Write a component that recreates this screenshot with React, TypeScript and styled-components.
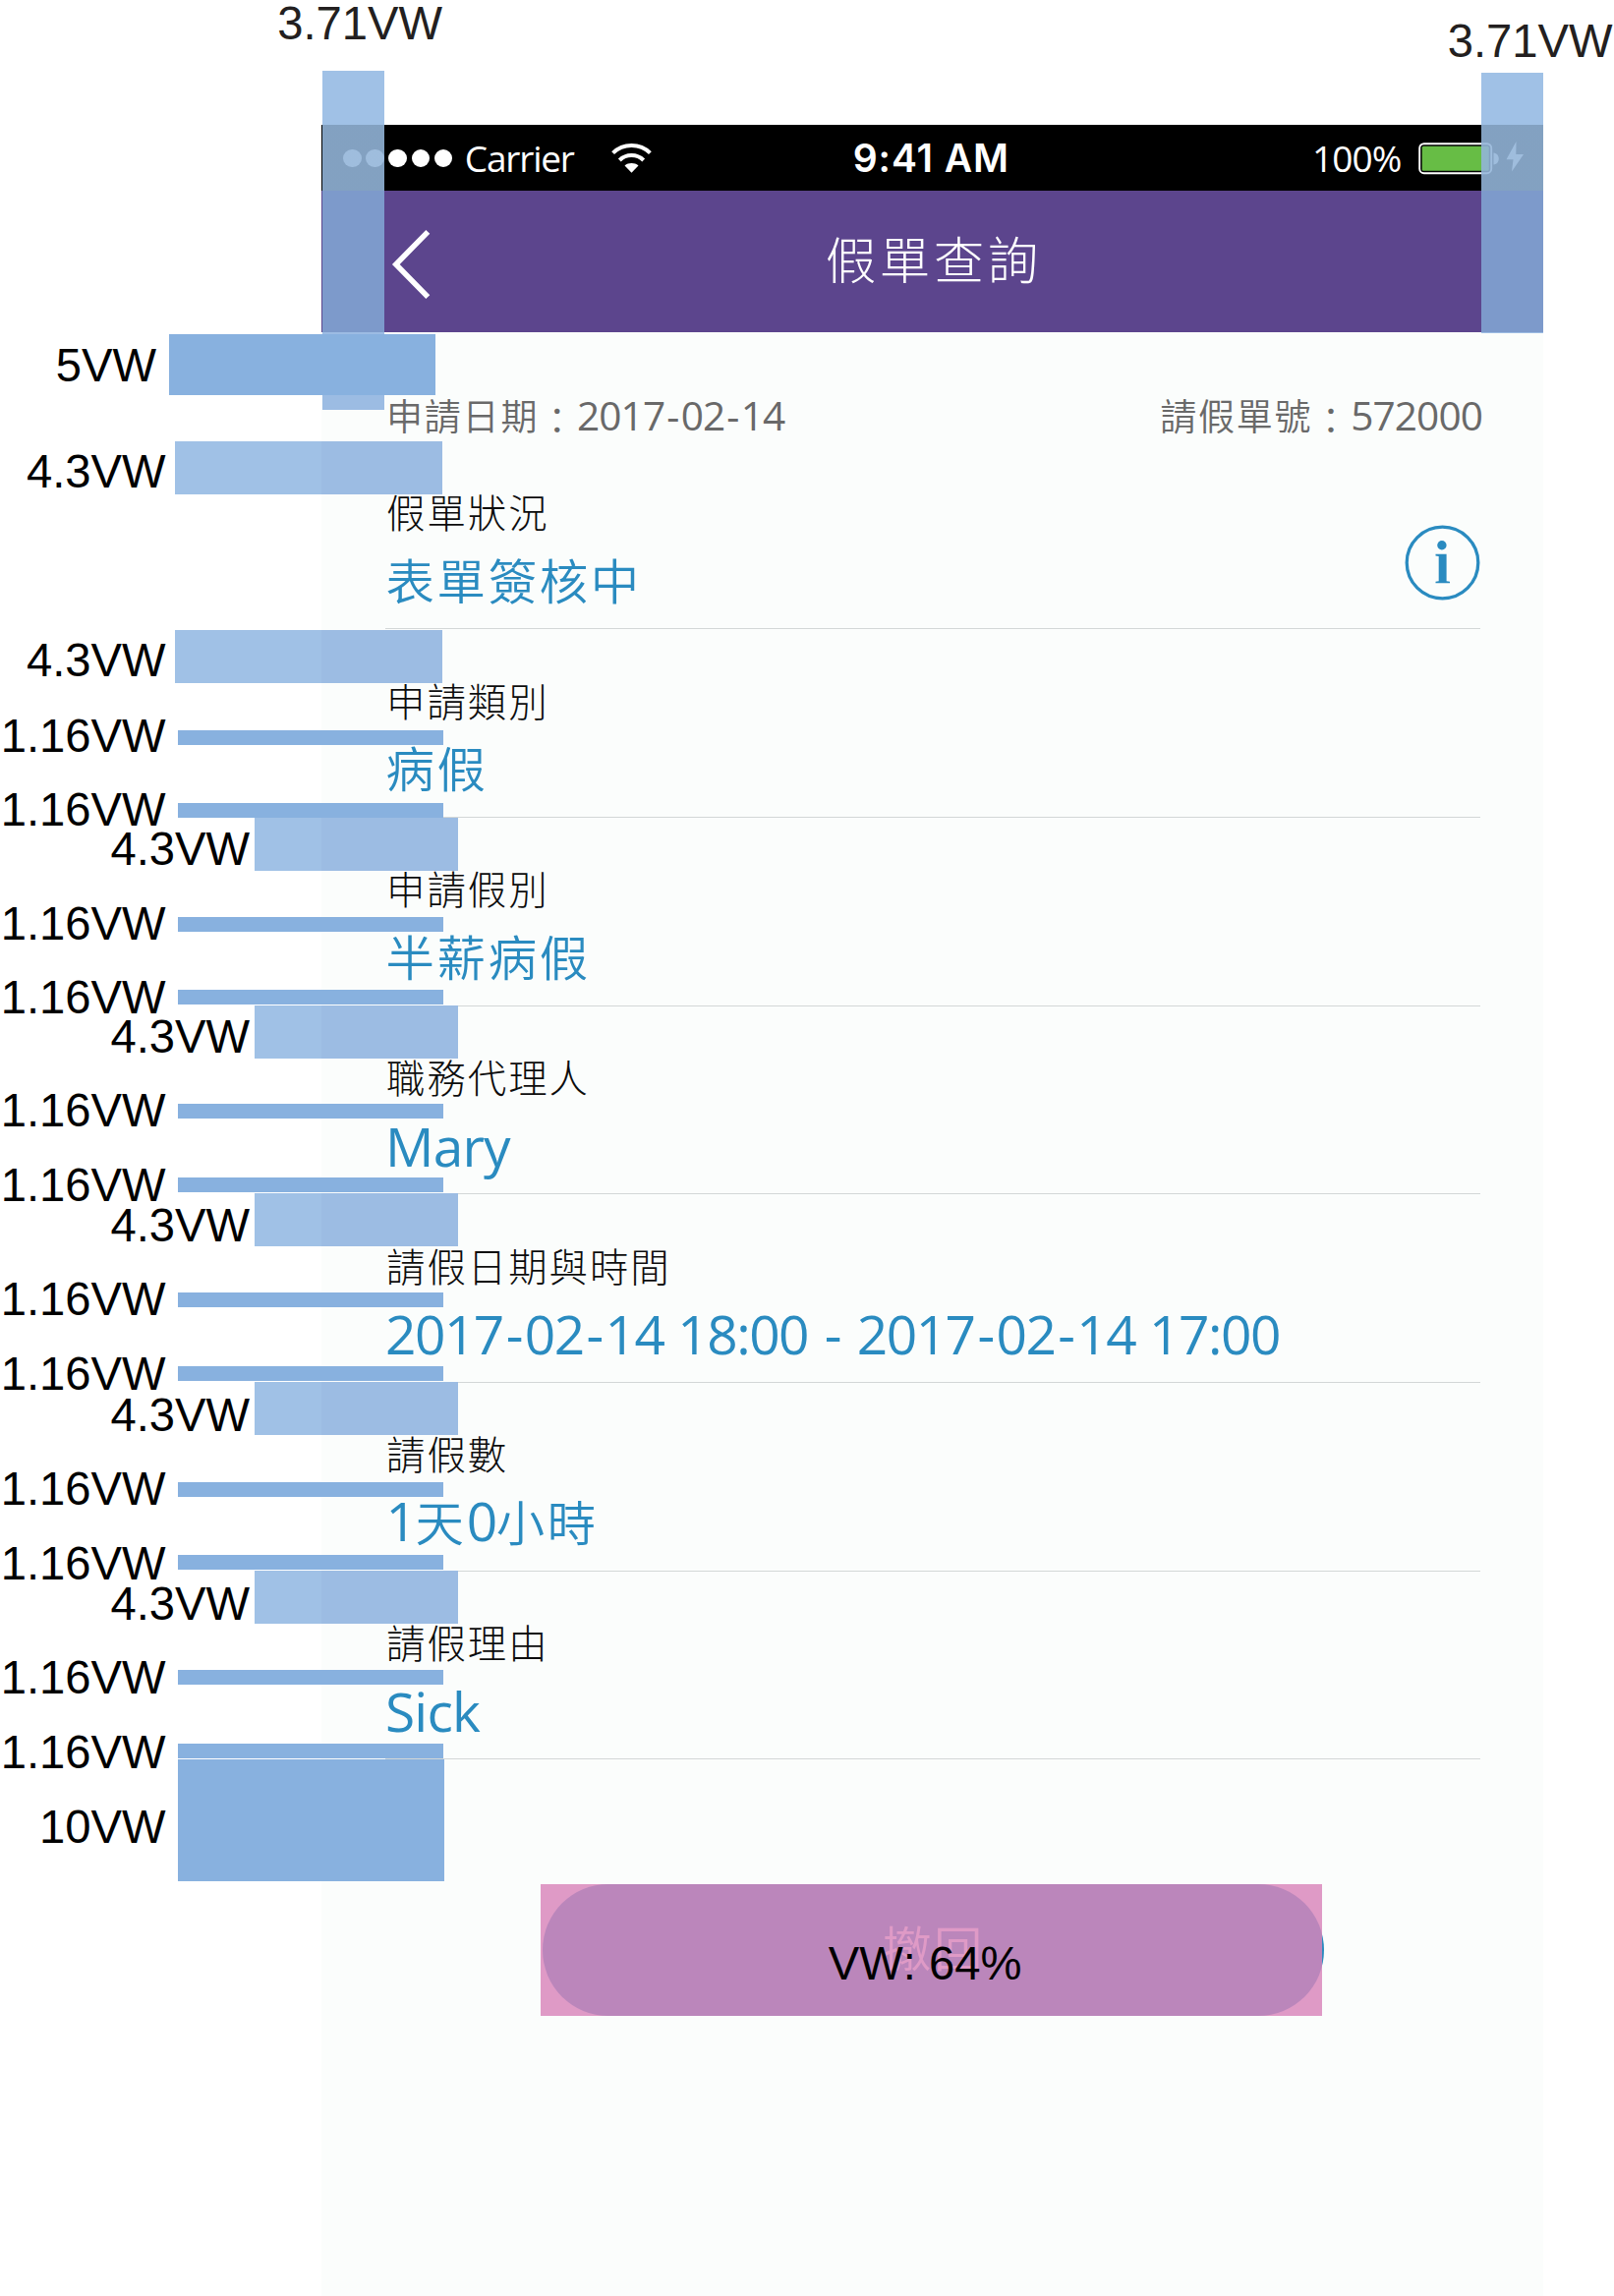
import React from "react";
import styled, { createGlobalStyle } from "styled-components";

const GlobalStyle = createGlobalStyle`
  * { box-sizing: border-box; }
  body { margin: 0; background: #fff; }
`;

const UI_FONT = `"Open Sans", "Noto Sans CJK TC", sans-serif`;
const CJK_FONT = `"Noto Sans CJK TC", sans-serif`;
const BLUE = "#2a8bc0";

const Canvas = styled.div`
  position: relative;
  width: 1642px;
  height: 2336px;
  overflow: hidden;
  padding: 127px 72px 0 327px;
  background: #fff;
`;

const Phone = styled.main`
  display: flex;
  flex-direction: column;
  width: 1242.5px;
  height: 2209px;
  background: #fbfdfc;
`;

const StatusBar = styled.div`
  display: grid;
  grid-template-columns: 1fr auto 1fr;
  align-items: center;
  height: 67px;
  padding: 0 19px 0 22px;
  background: #000;
  color: #fff;
`;

const StatusGroup = styled.div<{ $end?: boolean }>`
  display: flex;
  align-items: center;
  justify-content: ${(p) => (p.$end ? "flex-end" : "flex-start")};
`;

const SignalDots = styled.div`
  display: flex;
  gap: 4.6px;
  margin-right: 12.5px;
  padding-top: 1px;
`;

const Dot = styled.i`
  width: 18.6px;
  height: 18.6px;
  border-radius: 50%;
  background: #fff;
`;

const StatusText = styled.span<{ $spacing: number }>`
  font: 400 37px/65px ${UI_FONT};
  padding-bottom: 1px;
  letter-spacing: ${(p) => p.$spacing}px;
`;

const Clock = styled.span`
  margin-right: 5px;
  font: 600 39px/67px Inter, sans-serif;
  letter-spacing: 0.9px;
`;

const WifiIcon = styled.svg`
  margin-left: 38px;
`;

const BatteryIcon = styled.svg`
  margin-left: 17px;
`;

const NavBar = styled.header`
  display: grid;
  grid-template-columns: 1fr auto 1fr;
  align-items: center;
  height: 144px;
  padding: 0 65px 0 71px;
  background: #5c458d;
  color: #fff;
`;

const NavTitle = styled.h1`
  margin: 0 3px 9px 0;
  font: 320 51.5px/76px ${CJK_FONT};
  letter-spacing: 3.5px;
`;

const BackIcon = styled.svg`
  margin-top: 5px;
`;

const Content = styled.section`
  display: flex;
  flex-direction: column;
  padding: 0 63.5px 0 65px;
`;

const Meta = styled.div`
  display: flex;
  justify-content: space-between;
  height: 110.6px;
  margin-right: -2px;
  padding-top: 56px;
  color: #696969;
`;

const MetaItem = styled.span`
  display: flex;
  align-items: baseline;
  padding-left: 1px;
  line-height: 56px;
`;

const MetaName = styled.span`
  font-family: ${CJK_FONT};
  font-weight: 330;
  font-size: 37px;
  letter-spacing: 1.8px;
`;

const Colon = styled.span`
  display: inline-block;
  transform: translateY(4px);
`;

const MetaValue = styled.span`
  font-family: ${UI_FONT};
  font-weight: 390;
  font-size: 40.6px;
  letter-spacing: -0.9px;
`;

const Hyphen = styled.span`
  padding: 0 0.052em;
`;

const Field = styled.div`
  display: flex;
  align-items: flex-start;
  justify-content: space-between;
  height: 191.67px;
  border-bottom: 1px solid #d3d7d7;
`;

const FieldText = styled.div`
  display: flex;
  flex-direction: column;
  gap: 4.5px;
  padding-top: 41.5px;
`;

const FieldLabel = styled.span`
  padding-left: 1px;
  font: 320 39.4px/60px ${CJK_FONT};
  letter-spacing: 2px;
  color: #0c0c0c;
`;

const FieldValue = styled.span<{ $latin?: boolean; $tight?: boolean }>`
  height: 68px;
  padding-left: ${(p) => (p.$latin ? 0 : 0.5)}px;
  font: ${(p) => (p.$latin ? 390 : 340)} ${(p) => (p.$latin ? 55 : 49.4)}px/${(p) =>
      p.$latin ? 71 : 68}px
    ${(p) => (p.$latin ? UI_FONT : CJK_FONT)};
  letter-spacing: ${(p) => (p.$latin ? (p.$tight ? -1.5 : -0.8) : 2.7)}px;
  word-spacing: 1.1px;
  color: ${BLUE};
  white-space: pre;
`;

const Digit = styled.span`
  font: 390 55px/60px ${UI_FONT};
  letter-spacing: -1.4px;
`;

const InfoIcon = styled.svg`
  margin-top: 85px;
`;

const Actions = styled.div`
  display: flex;
  justify-content: center;
  padding-top: 127px;
`;

const WithdrawButton = styled.button`
  width: 795px;
  height: 134px;
  padding: 0 0 9px 2px;
  border: 0;
  border-radius: 67px;
  background: #2b8bbf;
  color: #fff;
  font: 340 49.4px/68px ${CJK_FONT};
  letter-spacing: 2.7px;
`;

/* Spacing annotations lie over the screen on a free canvas. */
const Bar = styled.i<{ $x: number; $y: number; $w: number; $h: number; $light?: boolean }>`
  position: absolute;
  left: ${(p) => p.$x}px;
  top: ${(p) => p.$y}px;
  width: ${(p) => p.$w}px;
  height: ${(p) => p.$h}px;
  background: ${(p) =>
    p.$light
      ? `linear-gradient(to right, #a0c1e6 ${327 - p.$x}px, #9cbce3 ${327 - p.$x}px)`
      : "#88b1df"};
`;

const Column = styled.i<{ $x: number; $y: number; $h: number }>`
  position: absolute;
  left: ${(p) => p.$x}px;
  top: ${(p) => p.$y}px;
  width: 63px;
  height: ${(p) => p.$h}px;
  background: linear-gradient(
    to bottom,
    #a0c1e6 ${(p) => 127 - p.$y}px,
    rgba(147, 181, 217, 0.89) ${(p) => 127 - p.$y}px,
    rgba(147, 181, 217, 0.89) ${(p) => 194 - p.$y}px,
    #7d9acb ${(p) => 194 - p.$y}px,
    #7d9acb ${(p) => 338 - p.$y}px,
    #9cbce3 ${(p) => 338 - p.$y}px
  );
`;

const Tag = styled.span<{ $right: number; $base: number; $soft?: boolean }>`
  position: absolute;
  right: ${(p) => 1642 - p.$right}px;
  top: ${(p) => p.$base - 39}px;
  font: 400 47.2px/46px "Liberation Sans", Arial, sans-serif;
  font-kerning: none;
  white-space: pre;
  color: ${(p) => (p.$soft ? "#231f20" : "#000")};
`;

const WidthOverlay = styled.i`
  position: absolute;
  left: 550px;
  top: 1917px;
  width: 795px;
  height: 134px;
  background: rgba(216, 134, 187, 0.832);
`;

type BarSpec = { x: number; y: number; w: number; h: number; light?: boolean };

const thin = (y: number): BarSpec => ({ x: 181, y, w: 270.4, h: 15 });
const block = (y: number): BarSpec => ({ x: 259, y, w: 207.4, h: 54, light: true });

const bars: BarSpec[] = [
  { x: 172, y: 340, w: 271, h: 62 },
  { x: 178, y: 449, w: 272, h: 54, light: true },
  { x: 178, y: 641, w: 272, h: 54, light: true },
  thin(743), thin(817), block(832),
  thin(933), thin(1007), block(1023),
  thin(1123), thin(1198), block(1214),
  thin(1315), thin(1390), block(1406),
  thin(1508), thin(1582), block(1598),
  thin(1699), thin(1774),
  { x: 181, y: 1790, w: 271, h: 124 },
];

const tags: [string, number, number][] = [
  ["5VW", 159, 388],
  ["4.3VW", 168.5, 496],
  ["4.3VW", 168.5, 688],
  ["1.16VW", 168.5, 765],
  ["1.16VW", 168.5, 840],
  ["4.3VW", 254, 880],
  ["1.16VW", 168.5, 955.5],
  ["1.16VW", 168.5, 1030.5],
  ["4.3VW", 254, 1070.5],
  ["1.16VW", 168.5, 1145.5],
  ["1.16VW", 168.5, 1221.5],
  ["4.3VW", 254, 1262.5],
  ["1.16VW", 168.5, 1338],
  ["1.16VW", 168.5, 1414],
  ["4.3VW", 254, 1455.5],
  ["1.16VW", 168.5, 1530.5],
  ["1.16VW", 168.5, 1607],
  ["4.3VW", 254, 1647.5],
  ["1.16VW", 168.5, 1723],
  ["1.16VW", 168.5, 1799],
  ["10VW", 168.5, 1875],
];

const hyphenated = (text: string) =>
  text.split("-").map((part, i) => (
    <React.Fragment key={i}>
      {i > 0 && <Hyphen>-</Hyphen>}
      {part}
    </React.Fragment>
  ));

type FieldSpec = {
  label: string;
  value: React.ReactNode;
  latin?: boolean;
  tight?: boolean;
  info?: boolean;
};

const fields: FieldSpec[] = [
  { label: "假單狀況", value: "表單簽核中", info: true },
  { label: "申請類別", value: "病假" },
  { label: "申請假別", value: "半薪病假" },
  { label: "職務代理人", value: "Mary", latin: true },
  {
    label: "請假日期與時間",
    value: hyphenated("2017-02-14 18:00 - 2017-02-14 17:00"),
    latin: true,
    tight: true,
  },
  { label: "請假數", value: <><Digit>1</Digit>天<Digit>0</Digit>小時</> },
  { label: "請假理由", value: "Sick", latin: true },
];

const Info = () => (
  <InfoIcon width="77" height="77" viewBox="0 0 77 77">
    <circle cx="38.5" cy="38.5" r="36.3" fill="none" stroke={BLUE} strokeWidth="3.3" />
    <circle cx="37.9" cy="20.8" r="4.7" fill={BLUE} />
    <path d="M31.5 29.7H42.6V57.3L46 57.8V59.2H31.5V57.8L34.7 57.3V32L31.5 31.4Z" fill={BLUE} />
  </InfoIcon>
);

export default function App() {
  return (
    <Canvas>
      <GlobalStyle />
      <Phone>
        <StatusBar>
          <StatusGroup>
            <SignalDots>
              {[0, 1, 2, 3, 4].map((n) => <Dot key={n} />)}
            </SignalDots>
            <StatusText $spacing={-1.2}>Carrier</StatusText>
            <WifiIcon width="41" height="32" viewBox="0 0 41 32">
              <g fill="none" stroke="#fff" strokeWidth="4">
                <path d="M1.6 10.6C12 .4 29 .4 39.4 10.6" />
                <path d="M8.3 18C15 11.4 26 11.4 32.7 18" />
              </g>
              <path d="M13.5 23.4C17.5 20.2 23.5 20.2 27.5 23.4L20.5 30.8Z" fill="#fff" />
            </WifiIcon>
          </StatusGroup>
          <Clock>9:41 AM</Clock>
          <StatusGroup $end>
            <StatusText $spacing={-0.9}>100%</StatusText>
            <BatteryIcon width="108" height="34" viewBox="0 0 108 34">
              <rect x="1.2" y="2.2" width="73" height="30" rx="4.5" fill="none" stroke="#fff" strokeWidth="1.9" />
              <rect x="3.7" y="4.8" width="68" height="25" rx="1.5" fill="#67bd45" />
              <path d="M76.5 11.5C83.5 12 83.5 23 76.5 23.5Z" fill="#fff" />
              <path d="M99.5 0L89.5 18.2H96.5L95 30.5L107 13H99.3Z" fill="#fff" />
            </BatteryIcon>
          </StatusGroup>
        </StatusBar>
        <NavBar>
          <BackIcon width="42" height="72" viewBox="0 0 42 72">
            <path d="M37.3 2.8L4.8 36L37.3 69.2" fill="none" stroke="#fff" strokeWidth="5.5" />
          </BackIcon>
          <NavTitle>假單查詢</NavTitle>
        </NavBar>
        <Content>
          <Meta>
            <MetaItem>
              <MetaName>申請日期<Colon>：</Colon></MetaName>
              <MetaValue>{hyphenated("2017-02-14")}</MetaValue>
            </MetaItem>
            <MetaItem>
              <MetaName>請假單號<Colon>：</Colon></MetaName>
              <MetaValue>572000</MetaValue>
            </MetaItem>
          </Meta>
          {fields.map((f) => (
            <Field key={f.label}>
              <FieldText>
                <FieldLabel>{f.label}</FieldLabel>
                <FieldValue $latin={f.latin} $tight={f.tight}>{f.value}</FieldValue>
              </FieldText>
              {f.info && <Info />}
            </Field>
          ))}
          <Actions>
            <WithdrawButton>撤回</WithdrawButton>
          </Actions>
        </Content>
      </Phone>

      <Column $x={328} $y={72} $h={345} />
      <Column $x={1506.5} $y={74} $h={265} />
      {bars.map((b) => (
        <Bar key={`${b.x}-${b.y}`} $x={b.x} $y={b.y} $w={b.w} $h={b.h} $light={b.light} />
      ))}
      <WidthOverlay />
      <Tag $right={450} $base={40} $soft>3.71VW</Tag>
      <Tag $right={1640.5} $base={58} $soft>3.71VW</Tag>
      {tags.map(([text, right, base]) => (
        <Tag key={base} $right={right} $base={base}>{text}</Tag>
      ))}
      <Tag $right={1039.5} $base={2013.5}>VW: 64%</Tag>
    </Canvas>
  );
}
